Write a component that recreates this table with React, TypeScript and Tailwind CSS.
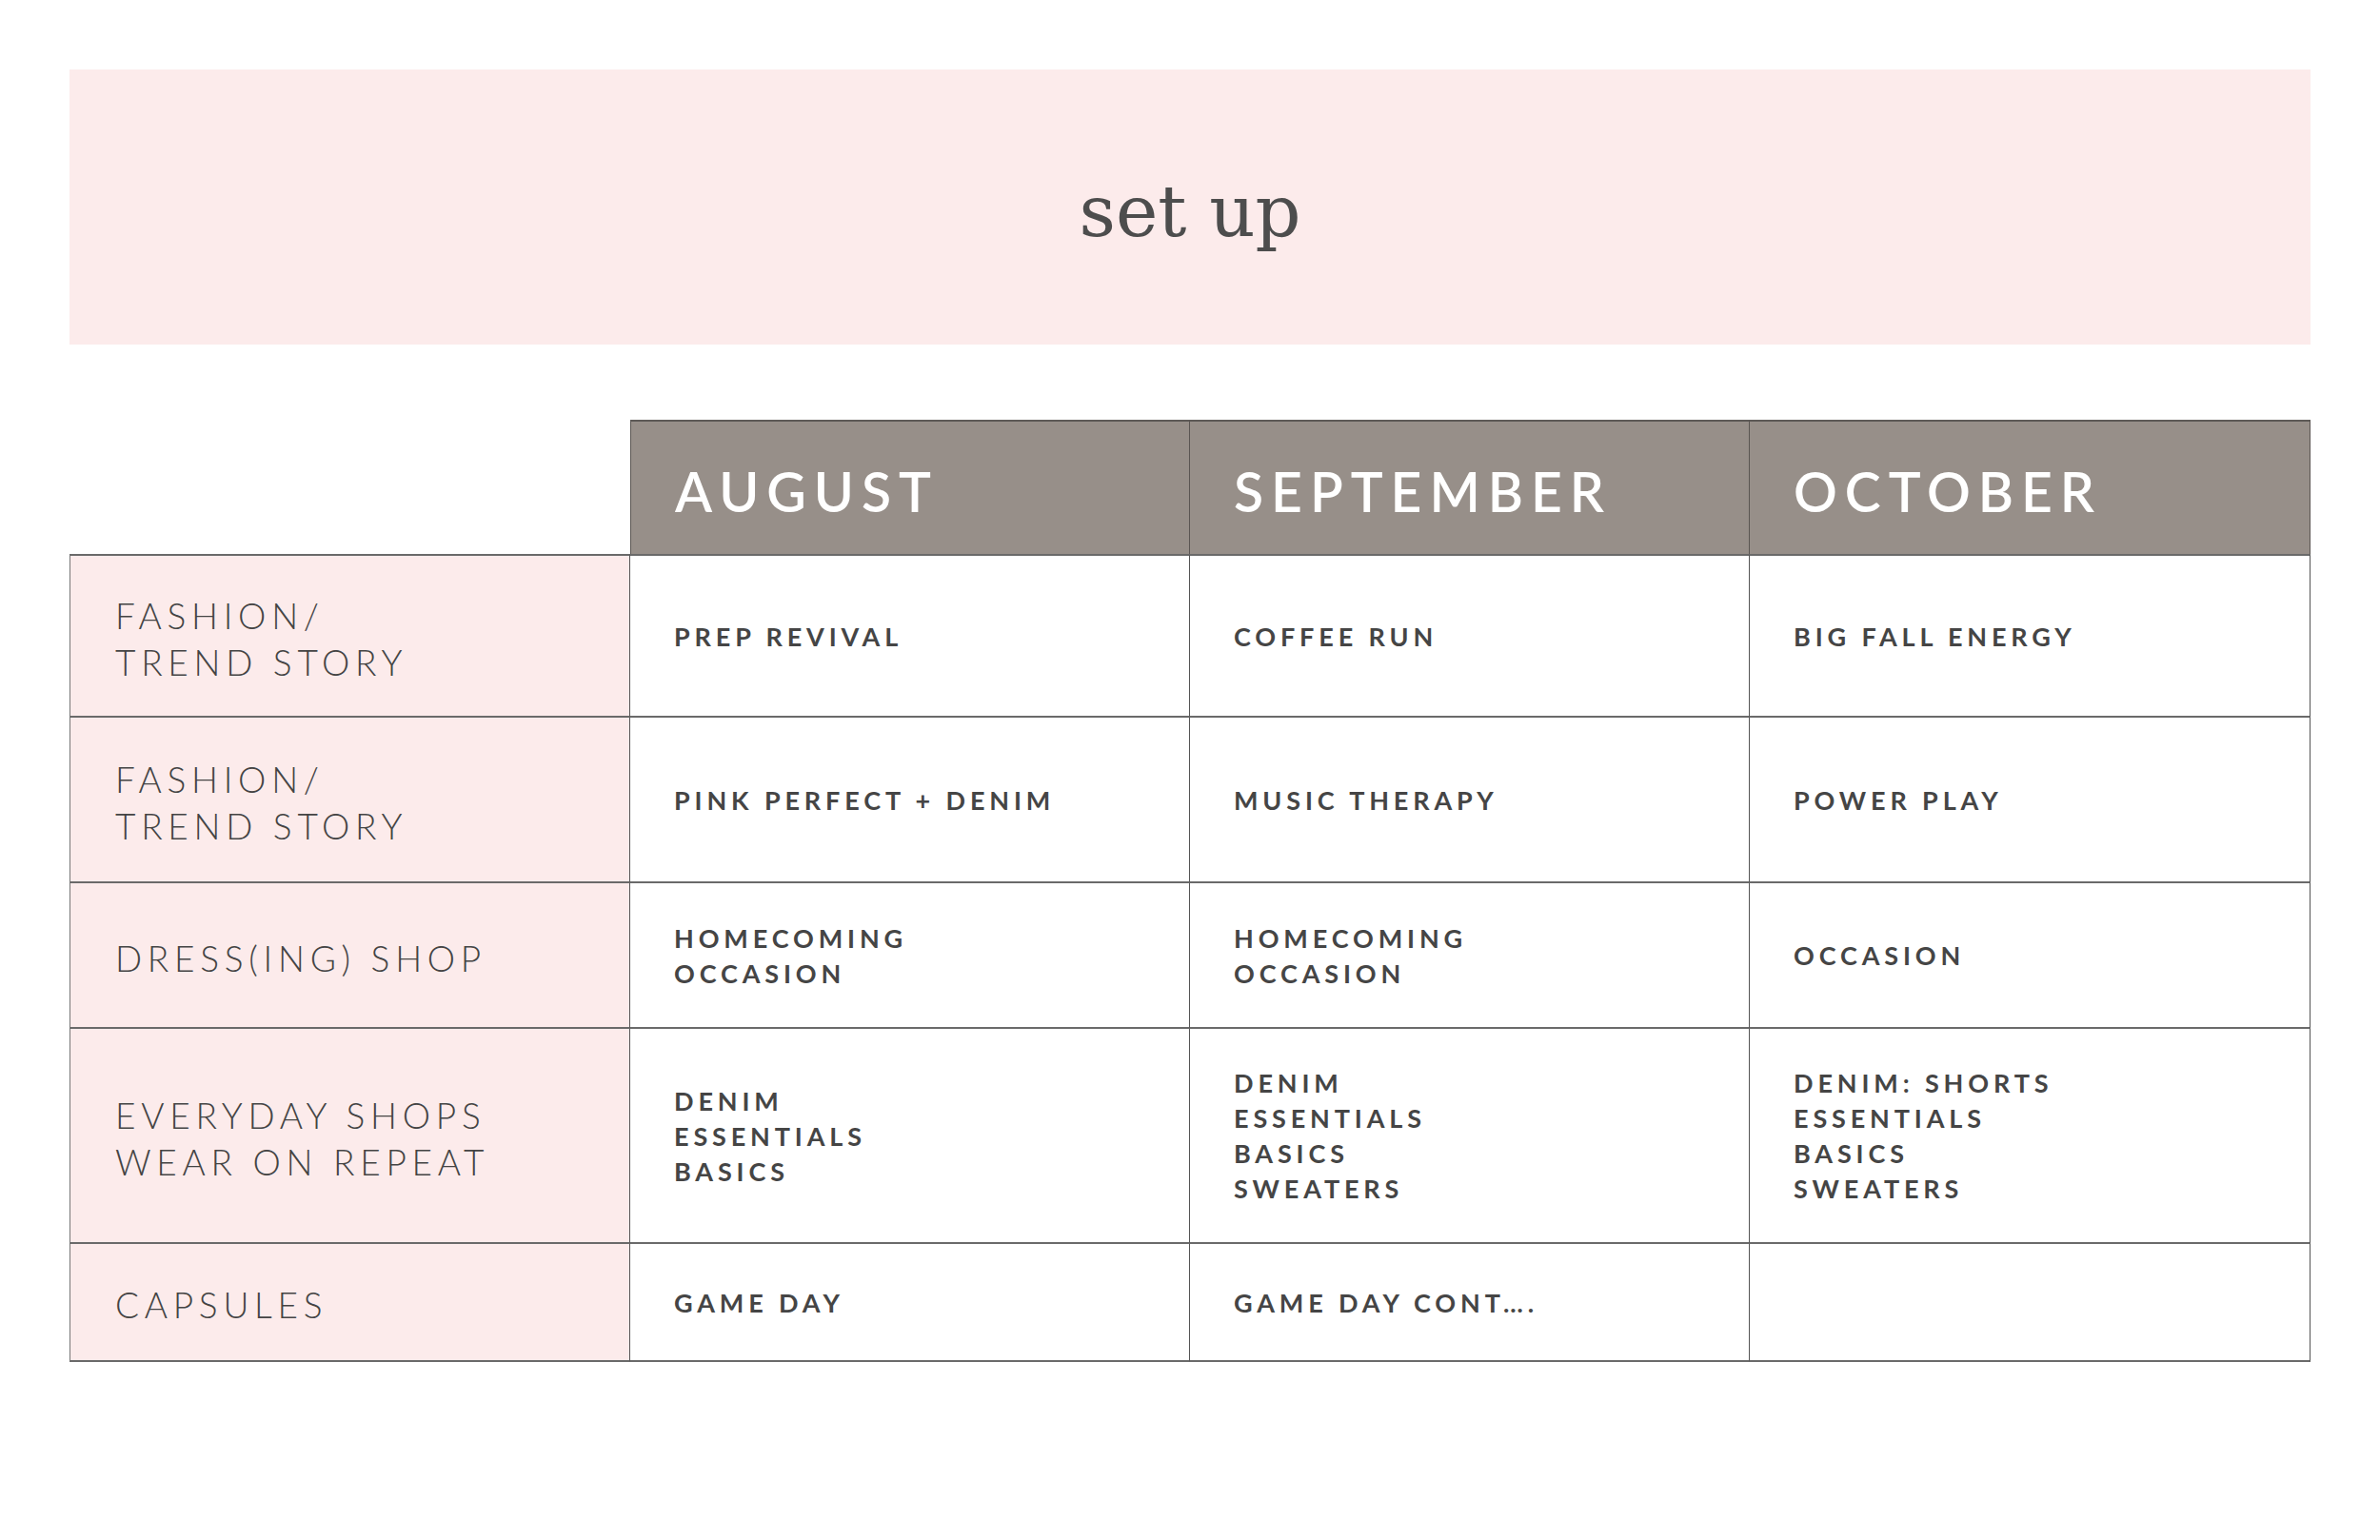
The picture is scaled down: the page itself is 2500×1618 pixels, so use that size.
import React from "react";

const months = ["AUGUST", "SEPTEMBER", "OCTOBER"];

const rows: { label: string[]; cells: string[][]; h: string }[] = [
  { label: ["FASHION/", "TREND STORY"], cells: [["PREP REVIVAL"], ["COFFEE RUN"], ["BIG FALL ENERGY"]], h: "h-[172px]" },
  { label: ["FASHION/", "TREND STORY"], cells: [["PINK PERFECT + DENIM"], ["MUSIC THERAPY"], ["POWER PLAY"]], h: "h-[174px]" },
  { label: ["DRESS(ING) SHOP"], cells: [["HOMECOMING", "OCCASION"], ["HOMECOMING", "OCCASION"], ["OCCASION"]], h: "h-[153px]" },
  {
    label: ["EVERYDAY SHOPS", "WEAR ON REPEAT"],
    cells: [
      ["DENIM", "ESSENTIALS", "BASICS"],
      ["DENIM", "ESSENTIALS", "BASICS", "SWEATERS"],
      ["DENIM: SHORTS", "ESSENTIALS", "BASICS", "SWEATERS"],
    ],
    h: "h-[226px]",
  },
  { label: ["CAPSULES"], cells: [["GAME DAY"], ["GAME DAY CONT…."], []], h: "h-[124px]" },
];

export default function App() {
  return (
    <div className="w-[2500px] h-[1618px] bg-white px-[73px] pt-[73px] [font-family:Lato,'Liberation_Sans',sans-serif]">
      <div className="h-[289px] bg-[#fcebeb] flex items-center justify-center">
        <span className="text-[75px] text-[#4d4d4d] leading-none pt-[10px] [font-family:'DejaVu_Serif',serif] font-light">
          set up
        </span>
      </div>
      <div className="mt-[79px] grid grid-cols-[589px_588px_588px_589px]">
        <div className="h-[141px]" />
        {months.map((m, i) => (
          <div
            key={m}
            className={`h-[141px] bg-[#978f89] border-t-2 border-t-[#5e5a57] border-r border-r-[#5a5552] flex items-center pl-[46px] pt-[8px] ${
              i === 0 ? "border-l border-l-[#5a5552]" : ""
            }`}
          >
            <span className="text-[57px] font-semibold text-white tracking-[0.14em] leading-none">{m}</span>
          </div>
        ))}
        {rows.map((r, ri) => (
          <React.Fragment key={ri}>
            <div
              className={`${r.h} bg-[#fcebeb] border-l border-l-[#777] border-r border-r-[#555] border-b-2 border-b-[#6a6a6a] ${
                ri === 0 ? "border-t-2 border-t-[#6a6a6a]" : ""
              } flex flex-col justify-center pl-[47px] pt-[5px]`}
            >
              {r.label.map((l, li) => (
                <div key={li} className="text-[37px] font-light text-[#444] tracking-[0.155em] leading-[49px]">
                  {l}
                </div>
              ))}
            </div>
            {r.cells.map((c, ci) => (
              <div
                key={ci}
                className={`${r.h} bg-white border-r border-r-[#555] border-b-2 border-b-[#6a6a6a] ${
                  ri === 0 ? "border-t-2 border-t-[#6a6a6a]" : ""
                } flex flex-col justify-center pl-[46px]`}
              >
                {c.map((t, ti) => (
                  <div key={ti} className="text-[27px] font-bold text-[#454545] tracking-[0.18em] leading-[37px]">
                    {t}
                  </div>
                ))}
              </div>
            ))}
          </React.Fragment>
        ))}
      </div>
    </div>
  );
}
